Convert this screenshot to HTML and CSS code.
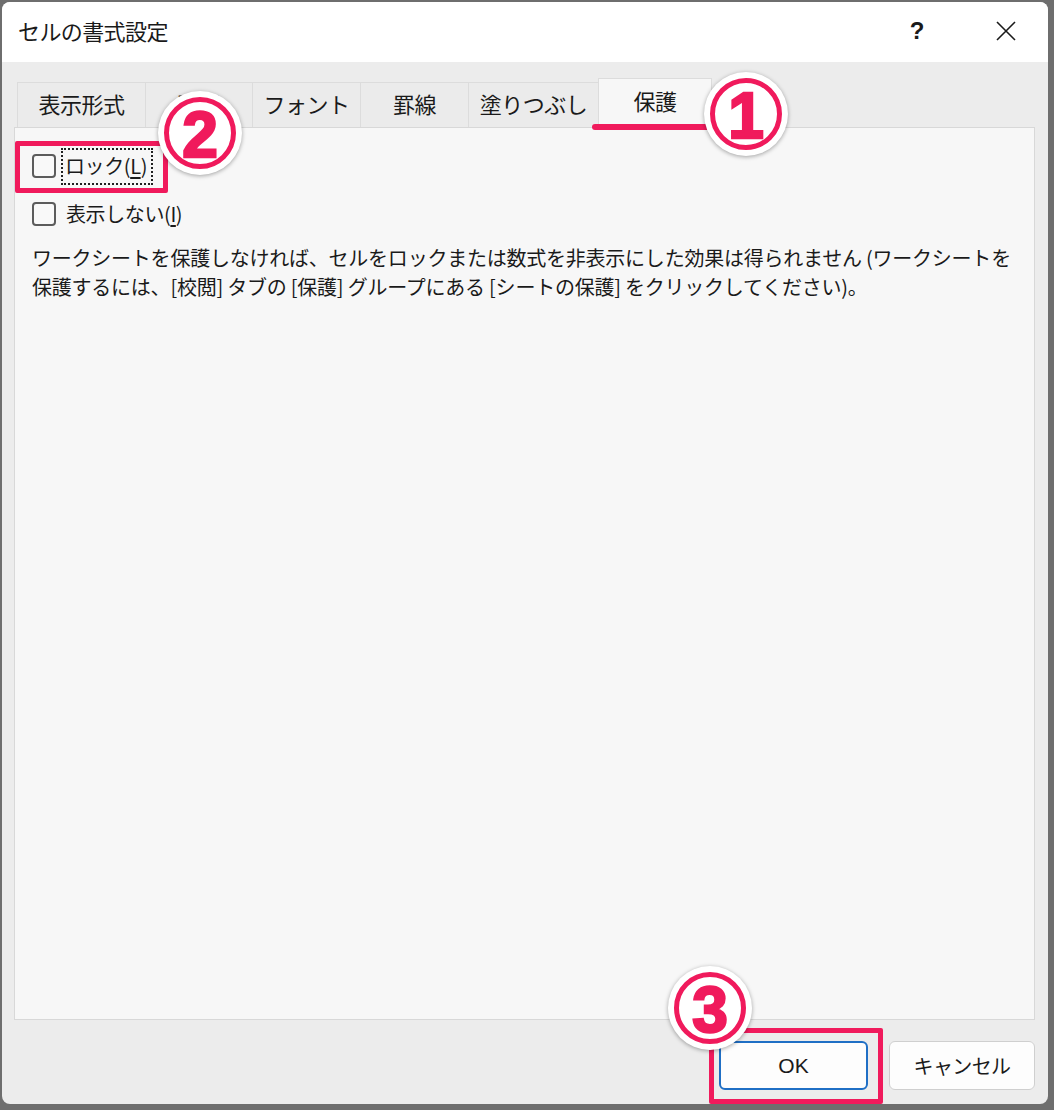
FILE: index.html
```html
<!DOCTYPE html>
<html lang="ja">
<head>
<meta charset="utf-8">
<title>セルの書式設定</title>
<link rel="stylesheet" href="styles.css">
</head>
<body>
<div class="window">
  <div class="titlebar">
    <div class="title">セルの書式設定</div>
    <div class="tb-buttons">
      <span class="help">?</span>
      <svg class="close" width="22" height="22" viewBox="0 0 22 22"><path d="M2 2 L20 20 M20 2 L2 20" stroke="#1a1a1a" stroke-width="1.6" fill="none"/></svg>
    </div>
  </div>
  <div class="body">
    <div class="tabs">
      <div class="tab t1">表示形式</div>
      <div class="tab t2">配置</div>
      <div class="tab t3">フォント</div>
      <div class="tab t4">罫線</div>
      <div class="tab t5">塗りつぶし</div>
      <div class="tab t6 selected">保護</div>
    </div>
    <div class="panel">
      <div class="check-row first">
        <span class="box"></span>
        <span class="label focus">ロック(<u>L</u>)</span>
      </div>
      <div class="check-row second">
        <span class="box"></span>
        <span class="label">表示しない(<u>I</u>)</span>
      </div>
      <p class="desc">ワークシートを保護しなければ、セルをロックまたは数式を非表示にした効果は得られません (ワークシートを<br>保護するには、[校閲] タブの [保護] グループにある [シートの保護] をクリックしてください)。</p>
    </div>
    <div class="footer">
      <button class="btn ok">OK</button>
      <button class="btn cancel">キャンセル</button>
    </div>
  </div>

  <div class="mark-line"></div>
  <div class="mark-rect r2"></div>
  <div class="mark-rect r3"></div>
  <div class="badge b1"><div class="ring">1</div></div>
  <div class="badge b2"><div class="ring">2</div></div>
  <div class="badge b3"><div class="ring">3</div></div>
</div>
</body>
</html>
```

FILE: styles.css
```css
* { box-sizing: border-box; }
html, body { margin: 0; padding: 0; }
body {
  background: #6e6e6e;
  width: 1054px;
  height: 1110px;
  overflow: hidden;
  font-family: "Noto Sans CJK JP", "Noto Sans", sans-serif;
  color: #1a1a1a;
}
.window {
  position: relative;
  margin: 2px 0 0 2px;
  width: 1046px;
  height: 1102px;
  border-radius: 8px;
  overflow: hidden;
  background: #ececec;
  display: flex;
  flex-direction: column;
}
.titlebar {
  height: 60px;
  background: #ffffff;
  display: flex;
  align-items: center;
  justify-content: space-between;
  padding: 0 0 0 16px;
  flex: none;
}
.title {
  font-size: 22px;
  letter-spacing: -0.6px;
  line-height: 1;
  margin-top: -4px;
}
.tb-buttons {
  display: flex;
  align-items: center;
  margin-top: -3px;
}
.help {
  font-family: "Liberation Sans", sans-serif;
  font-size: 24px;
  font-weight: bold;
  width: 40px;
  text-align: center;
  margin-right: 58px;
}
.close {
  margin-right: 31px;
  display: block;
}
.body {
  flex: 1;
  display: flex;
  flex-direction: column;
  padding: 16px 13px 0 12px;
}
.tabs {
  display: flex;
  align-items: flex-end;
  height: 49px;
  padding-left: 3px;
  flex: none;
  position: relative;
  z-index: 1;
}
.tab {
  height: 45px;
  border: 1px solid #dcdcdc;
  border-bottom: none;
  border-right: none;
  background: #ebebeb;
  font-size: 22px;
  letter-spacing: -0.5px;
  display: flex;
  align-items: center;
  justify-content: center;
  padding-bottom: 5px;
}
.t1 { width: 128px; }
.t2 { width: 107px; }
.t3 { width: 108px; }
.t4 { width: 108px; }
.t5 { width: 130px; }
.t6 { width: 114px; }
.tab.selected {
  height: 50px;
  background: #f7f7f7;
  border-right: 1px solid #dcdcdc;
  margin-bottom: -1px;
  padding-bottom: 7px;
}
.panel {
  height: 893px;
  background: #f7f7f7;
  border: 1px solid #d8d8d8;
  padding: 21px 0 0 17px;
  flex: none;
}
.check-row {
  display: flex;
  align-items: center;
  height: 34px;
}
.check-row.second { margin-top: 14px; }
.box {
  width: 24px;
  height: 24px;
  border: 2px solid #5c5c5c;
  border-radius: 4px;
  background: #f9f9f9;
  flex: none;
}
.label {
  font-size: 20px;
  letter-spacing: -0.4px;
  line-height: 1;
}
.first .label {
  margin-left: 5px;
  padding: 6px 4px 7px 2px;
  border: 2px dotted #202020;
}
.second .label { margin-left: 10px; }
.label u { text-underline-offset: 3px; }
.desc {
  margin: 12px 0 0 0;
  font-size: 20px;
  line-height: 29px;
  letter-spacing: -0.23px;
  white-space: nowrap;
}
.footer {
  display: flex;
  justify-content: flex-end;
  gap: 21px;
  padding-top: 21px;
  padding-right: 0;
}
.btn {
  height: 49px;
  border-radius: 6px;
  font-family: "Noto Sans CJK JP", "Noto Sans", sans-serif;
  font-size: 20px;
  color: #1a1a1a;
  background: #fdfdfd;
  padding: 0;
}
.btn.ok {
  width: 149px;
  border: 2px solid #1f6fc5;
  font-family: "Liberation Sans", sans-serif;
  font-size: 21px;
}
.btn.cancel {
  width: 146px;
  border: 1px solid #cfcfcf;
  letter-spacing: -0.6px;
}

/* annotations */
.mark-line {
  position: absolute;
  left: 590px;
  top: 122px;
  width: 120px;
  height: 6px;
  border-radius: 3px;
  background: #f01a5c;
  z-index: 5;
}
.mark-rect {
  position: absolute;
  border: 5px solid #f01a5c;
  border-radius: 2px;
  z-index: 5;
}
.r2 { left: 13px; top: 139px; width: 153px; height: 52px; }
.r3 { left: 707px; top: 1026px; width: 174px; height: 76px; }
.badge {
  position: absolute;
  width: 84px;
  height: 84px;
  border-radius: 50%;
  background: #ffffff;
  box-shadow: 0 1px 4px rgba(0,0,0,0.35);
  display: flex;
  align-items: center;
  justify-content: center;
  z-index: 6;
}
.ring {
  width: 72px;
  height: 72px;
  border-radius: 50%;
  border: 5px solid #f01a5c;
  color: #f01a5c;
  -webkit-text-stroke: 2.5px #f01a5c;
  font-family: "Liberation Sans", sans-serif;
  font-weight: bold;
  font-size: 64px;
  line-height: 1;
  display: flex;
  align-items: center;
  justify-content: center;
  padding-top: 3px;
}
.b1 { left: 702px; top: 70px; }
.b2 { left: 156px; top: 89px; }
.b3 { left: 666px; top: 964px; }
```
